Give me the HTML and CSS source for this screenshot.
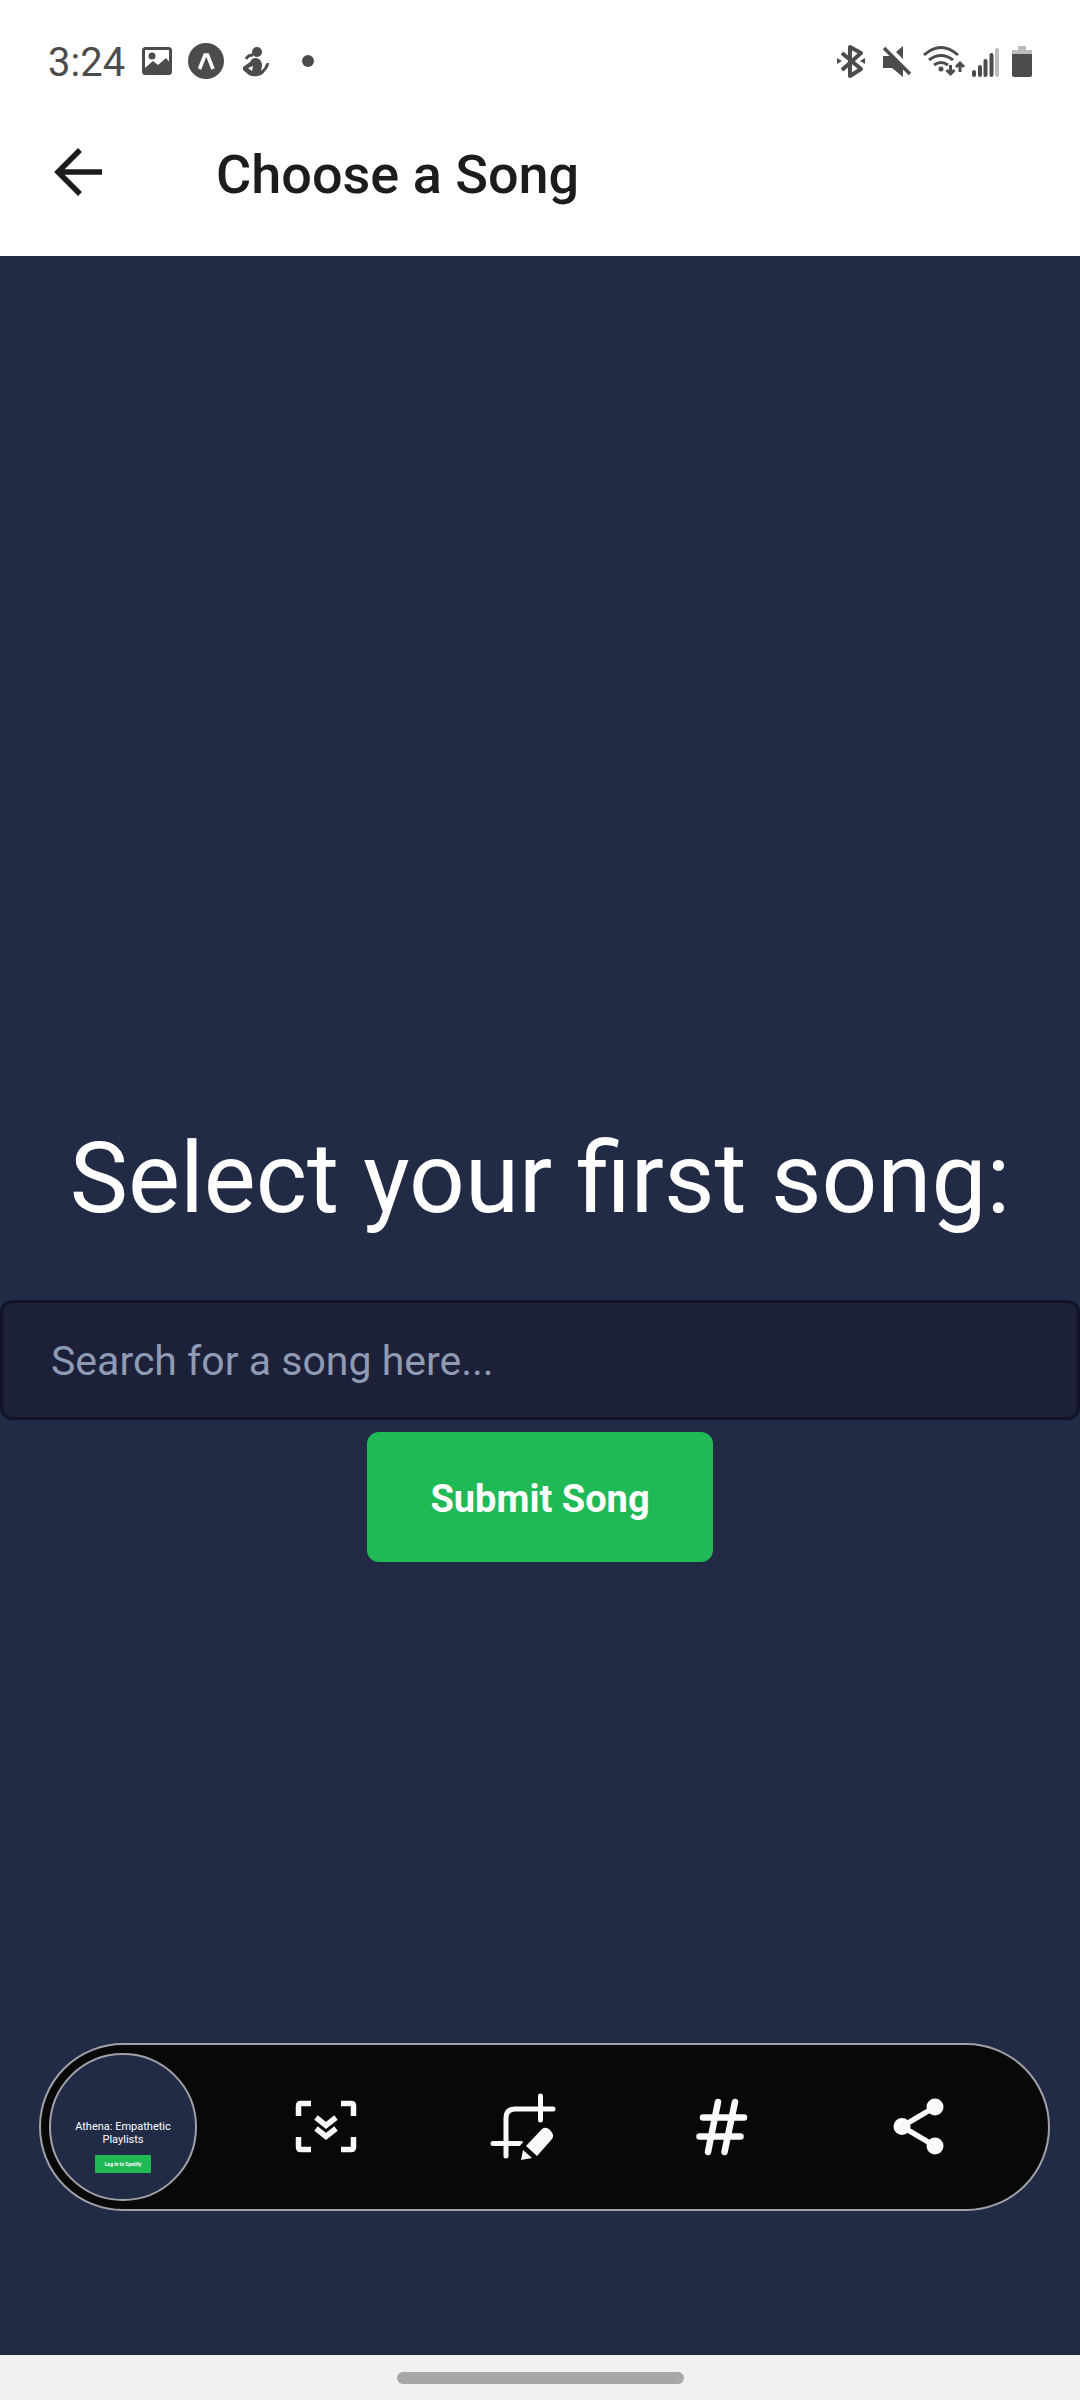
FILE: index.html
```html
<!DOCTYPE html>
<html lang="en">
<head>
<meta charset="utf-8">
<meta name="viewport" content="width=device-width, initial-scale=1">
<title>Choose a Song</title>
<link rel="stylesheet" href="styles.css">
</head>
<body>
<div class="status">
  <time class="clock">3:24</time>
  <svg class="status-left" width="194" height="40" viewBox="0 0 194 40" fill="#4c4c4c" aria-hidden="true">
    <rect x="1.500" y="7.500" width="27" height="25" rx="2" fill="none" stroke="#4c4c4c" stroke-width="3"/>
    <circle cx="10" cy="15" r="3.500"/>
    <path d="M3 27l8-7 5 4 8-7 5 6v10H3z"/>
    <circle cx="64" cy="20" r="18"/>
    <path d="M57.500 28l5.500-14h2.500l5.500 14" fill="none" stroke="#fff" stroke-width="3.600"/>
    <circle cx="115" cy="11" r="5"/>
    <path d="M111 14q-5 0-7 4" fill="none" stroke="#4c4c4c" stroke-width="3"/>
    <path fill-rule="evenodd" d="M110 18q3-2 7 0 3 2 3 7l-1 5q4-3 5-7l1-1h2q0 4-4 8-2 4-7 5-6 1-9-1l-6-5v-3l7-5zM106 27l4 3 1-5z"/>
    <circle cx="166" cy="20" r="6"/>
  </svg>
  <svg class="status-right" width="200" height="40" viewBox="0 0 200 40" fill="#4c4c4c" aria-hidden="true">
    <path d="M5 12l19 16-11 7V6l11 6L5 29" fill="none" stroke="#4c4c4c" stroke-width="4" stroke-linejoin="round"/>
    <path d="M0 17l5 3-5 3zM28 17l-5 3 5 3z"/>
    <path d="M46 15h8l12 12v9l-11-9h-9zM66 5v13l-7-7z"/>
    <path d="M47 7l26 26" stroke="#4c4c4c" stroke-width="3.500"/>
    <g fill="none" stroke="#4c4c4c" stroke-width="3">
      <path d="M87 14q17-15 34 0M92 19q12-9 24 0M97 24q7-5 14 0M113.500 24v9M109.500 29l4 4 4-4M123 31v-9M119 26l4-4 4 4"/>
    </g>
    <circle cx="104" cy="28" r="2.500"/>
    <g stroke="#4c4c4c" stroke-width="4" stroke-linecap="round">
      <path d="M137 31v3M143 26v8M148.500 20v14M154.500 14v20"/>
      <path d="M160 9v25" stroke="#bcbcbc"/>
    </g>
    <path d="M181 5h8v4h6v5h-20V9h6z" fill="#bcbcbc"/>
    <path d="M175 13h20v21q0 2-2 2h-16q-2 0-2-2z"/>
  </svg>
</div>
<header class="header">
  <button class="back" type="button" aria-label="Back">
    <svg width="48" height="48" viewBox="0 0 48 48" fill="none" stroke="#1c1c1e" stroke-width="5.500"><path d="M48 24H4M26 2L4 24l22 22"/></svg>
  </button>
  <h1 class="title">Choose a Song</h1>
</header>
<main class="main">
  <form class="form">
    <label class="prompt" for="song">Select your first song:</label>
    <input class="search" id="song" type="text" placeholder="Search for a song here...">
    <button class="submit" type="button">Submit Song</button>
  </form>
  <div class="capture-bar">
    <div class="thumb">
      <p class="thumb-title">Athena: Empathetic Playlists</p>
      <span class="thumb-button">Log in to Spotify</span>
    </div>
    <button class="tool" type="button" aria-label="Scroll capture">
      <svg width="72" height="72" viewBox="0 0 72 72" fill="none" stroke="#fafafa">
        <path stroke-width="5.500" d="M8.500 25V15q0-2.500 2.500-2.500h10M51 12.500h10q2.500 0 2.500 2.500v10M63.500 46v10q0 2.500-2.500 2.500H51M21 58.500H11q-2.500 0-2.500-2.500V46"/>
        <path stroke-width="5.500" d="M26 26.500l10 8 10-8M26 37.500l10 8 10-8"/>
      </svg>
    </button>
    <button class="tool" type="button" aria-label="Crop and edit">
      <svg width="72" height="72" viewBox="0 0 72 72" fill="#fafafa">
        <g fill="none" stroke="#fafafa" stroke-width="5" stroke-linecap="round">
          <path d="M18 65V27q0-9 9-9h38M52.500 5v24M5 52.500h28"/>
        </g>
        <path fill="#080808" d="M48 38l9-9v10H47zM29 58l9-10-1 10z"/>
        <path d="M38 55l16-17q4-3 8 1 5 5 2 9L49 65zM35 59l9 8-11 2z"/>
      </svg>
    </button>
    <button class="tool" type="button" aria-label="Add tag">
      <svg width="72" height="72" viewBox="0 0 72 72" fill="none" stroke="#fafafa" stroke-width="6.500" stroke-linecap="round"><path d="M33 11L23 61M50 11L39.500 61M18 26.500h41M14.500 45.500h41"/></svg>
    </button>
    <button class="tool" type="button" aria-label="Share">
      <svg width="72" height="72" viewBox="0 0 72 72" fill="#fafafa"><path d="M52 16L19 35.500 52 55" fill="none" stroke="#fafafa" stroke-width="5.500"/><circle cx="19" cy="35.500" r="8.500"/><circle cx="52" cy="16" r="8.500"/><circle cx="52" cy="55" r="8.500"/></svg>
    </button>
  </div>
</main>
<footer class="nav"><span class="nav-handle"></span></footer>
</body>
</html>
```
FILE: styles.css
```css
* { box-sizing: border-box; }
body {
  margin: 0;
  min-height: 100vh;
  display: flex;
  flex-direction: column;
  font-family: Roboto, sans-serif;
  background: #222b45;
}
button { font-family: inherit; border: 0; cursor: pointer; }
svg { display: block; }
.status {
  display: flex;
  align-items: flex-start;
  padding: 41px 43px 0 48px;
  background: #fff;
}
.clock { font-size: 40px; line-height: 44px; color: #4c4c4c; }
.status-left { margin-left: 17px; }
.status-right { margin-left: auto; }
.header {
  display: flex;
  align-items: center;
  gap: 114px;
  height: 171px;
  padding: 8px 54px 0;
  background: #fff;
}
.back { padding: 0; margin-bottom: 6px; background: none; }
.title { margin: 0; font-size: 54px; line-height: 64px; font-weight: 500; color: #1c1c1e; }
.main {
  position: relative;
  flex: 1;
  display: flex;
  flex-direction: column;
  justify-content: center;
}
.form {
  display: flex;
  flex-direction: column;
  align-items: center;
  padding-top: 72px;
}
.prompt {
  margin-bottom: 64px;
  font-size: 98px;
  line-height: 114px;
  text-align: center;
  color: #fff;
}
.search {
  width: 100%;
  height: 120px;
  margin-bottom: 12px;
  padding: 2px 48px 0;
  border: 3px solid #101426;
  border-radius: 12px;
  background: #1c2039;
  font: 41px/50px Roboto, sans-serif;
  color: #fff;
}
.search::placeholder { color: #8f9bb3; opacity: 1; }
.submit {
  height: 130px;
  padding: 4px 63px 0;
  border-radius: 12px;
  background: #1fb955;
  font-size: 38px;
  line-height: 48px;
  font-weight: 700;
  color: #fff;
}
.capture-bar {
  position: absolute;
  left: 39px;
  right: 30px;
  bottom: 144px;
  display: flex;
  align-items: center;
  padding: 8px 30px 8px 8px;
  border: 2px solid #a0a1a8;
  border-radius: 84px;
  background: #080808;
}
.thumb {
  display: flex;
  flex-direction: column;
  align-items: center;
  width: 148px;
  height: 148px;
  margin-right: 30px;
  padding-top: 65px;
  border: 2px solid #a0a1a8;
  border-radius: 50%;
  background: #222b45;
  text-align: center;
  color: #fff;
}
.thumb-title { width: 110px; margin: 0 0 9px; font-size: 11px; line-height: 13px; }
.thumb-button {
  width: 56px;
  border-radius: 1px;
  background: #1fb955;
  font-size: 5px;
  line-height: 18px;
  font-weight: 700;
}
.tool {
  flex: 1;
  display: flex;
  justify-content: center;
  padding: 0;
  background: none;
}
.nav {
  display: flex;
  justify-content: center;
  padding: 17px 0 16px;
  background: #f1f1f1;
}
.nav-handle { width: 287px; height: 12px; border-radius: 6px; background: #a7a7a7; }
```
